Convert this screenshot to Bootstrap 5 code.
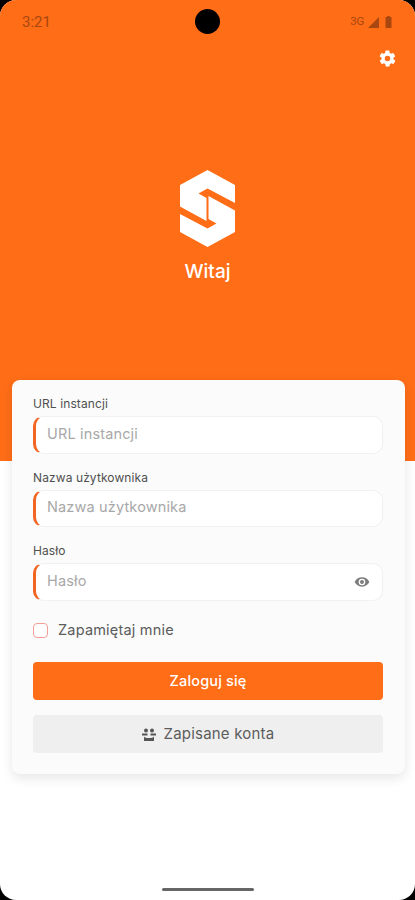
<!DOCTYPE html>
<html lang="pl">
<head>
<meta charset="utf-8">
<meta name="viewport" content="width=device-width, initial-scale=1">
<link href="https://cdn.jsdelivr.net/npm/bootstrap@5.3.0/dist/css/bootstrap.min.css" rel="stylesheet">
<style>
html,body{height:100%;background:#000;overflow:hidden}
body{font-family:"Inter","Liberation Sans",sans-serif}
.app-screen{width:415px;height:900px;background:#fff;border-radius:16px;overflow:hidden;position:relative}
.hero-band{height:461px;background:#ff6d17}
.status-row{height:44px;padding:0 23px 0 22px;color:#a8470f;font-size:15px;font-family:"Roboto",sans-serif}
.status-3g{font-size:11.5px;letter-spacing:-.3px;margin-right:4px}
.sig-icon{margin-right:6px}
.cam-dot{width:25px;height:25px;background:#000;border-radius:50%;left:195px;top:9px}
.gear-row{padding:5px 18px 0 0;height:42px}
.logo-stack{margin-top:84px}
.welcome{font-size:19px;color:#fff;font-weight:500;margin-top:13px;line-height:24px}
.login-panel{margin:-81px 10px 0 12px;height:394px;background:#fbfbfb;border-radius:8px;box-shadow:0 4px 12px rgba(0,0,0,.1);padding:15px 22px 0 21px;position:relative}
.fld-label{font-size:12px;letter-spacing:.1px;color:#505050;line-height:18px;margin-bottom:3px;display:block}
.fld-wrap{height:37.5px;background:#fff;border:1px solid #f1f1f1;border-left:3px solid #f26522;border-radius:10px;margin-bottom:15px;padding-left:11px}
.fld-input{border:0;outline:0;background:transparent;flex:1;min-width:0;height:100%;font-size:14.5px;letter-spacing:.15px;color:#444;font-family:inherit;padding:0 0 3px}
.fld-input::placeholder{color:#a8a8a8;opacity:1}
.eye-icon{margin-right:12px}
.remember{margin-top:20.500px;height:18px}
.tick-box{width:15px;height:15px;border:1.5px solid #f4a097;border-radius:4px;background:#fff;flex:none}
.tick-label{font-size:14.5px;letter-spacing:.2px;color:#5c5c5c;margin-left:10px}
.btn-login{background:#ff6d17;color:#fff;font-size:14.5px;letter-spacing:.15px;font-weight:500;height:38px;border-radius:4px;border:0;margin-top:23px;width:100%}
.btn-login:hover{background:#ff6d17;color:#fff}
.btn-saved{background:#efefef;color:#5c5c5c;font-size:15px;letter-spacing:.2px;height:38px;border-radius:4px;border:0;margin-top:15px;width:100%}
.home-bar{width:92px;height:3px;background:#666;border-radius:2px;left:162px;bottom:9px}
</style>
</head>
<body>
<div class="app-screen">
  <div class="hero-band">
    <div class="status-row d-flex align-items-center justify-content-between">
      <span>3:21</span>
      <span class="d-flex align-items-center">
        <span class="status-3g">3G</span>
        <svg class="sig-icon" width="11" height="11" viewBox="0 0 11 11"><path d="M11 0V11H0Z" fill="#a8470f"/></svg>
        <svg width="7" height="12" viewBox="0 0 7 12"><path d="M2.200 0h2.600v1H6.500v11H.5V1h1.700z" fill="#a8470f"/></svg>
      </span>
    </div>
    <div class="gear-row d-flex justify-content-end">
      <svg width="19" height="19" viewBox="0 0 24 24"><path fill="#fff" d="M19.400 13c.1-.3.1-.6.1-1s0-.7-.1-1l2.100-1.600c.2-.2.2-.4.1-.6l-2-3.500c-.1-.2-.4-.3-.6-.2l-2.500 1c-.5-.4-1.100-.7-1.700-1l-.4-2.600c0-.3-.2-.5-.5-.5h-4c-.3 0-.5.2-.5.400l-.4 2.700c-.6.2-1.200.6-1.700 1l-2.500-1c-.2-.1-.5 0-.6.200l-2 3.500c-.1.200 0 .5.100.600L4.600 11c0 .3-.1.700-.1 1s0 .7.100 1l-2.100 1.600c-.2.200-.2.400-.1.600l2 3.500c.1.200.4.300.6.200l2.500-1c.5.400 1.100.700 1.700 1l.4 2.600c0 .3.200.5.500.5h4c.3 0 .5-.2.500-.400l.4-2.700c.6-.2 1.200-.6 1.700-1l2.500 1c.2.100.5 0 .6-.200l2-3.500c.1-.200 0-.5-.100-.600zM12 15.500a3.500 3.500 0 1 1 0-7 3.500 3.500 0 0 1 0 7z"/></svg>
    </div>
    <div class="logo-stack d-flex flex-column align-items-center">
      <svg width="55" height="77" viewBox="0 0 55 77">
        <path fill="#fff" d="M27.500 0 55 15V33L27.500 18.500 18.500 23.500 26.500 28V51L0 36.500V15Z"/>
        <path fill="#fff" d="M27.500 77 0 62V44L27.500 58.500 36.500 53.500 28.500 49V26L55 40.500V62Z"/>
      </svg>
      <div class="welcome">Witaj</div>
    </div>
  </div>
  <div class="login-panel">
    <label class="fld-label">URL instancji</label>
    <div class="fld-wrap d-flex align-items-center"><input class="fld-input" placeholder="URL instancji"></div>
    <label class="fld-label">Nazwa użytkownika</label>
    <div class="fld-wrap d-flex align-items-center"><input class="fld-input" placeholder="Nazwa użytkownika"></div>
    <label class="fld-label">Hasło</label>
    <div class="fld-wrap d-flex align-items-center">
      <input class="fld-input" placeholder="Hasło">
      <svg class="eye-icon" width="16" height="16" viewBox="0 0 24 24"><path fill="#7d7d7d" d="M12 5C7 5 2.700 8.100 1 12c1.700 3.900 6 7 11 7s9.300-3.100 11-7c-1.700-3.900-6-7-11-7zm0 12a5 5 0 1 1 0-10 5 5 0 0 1 0 10zm0-8a3 3 0 1 0 0 6 3 3 0 0 0 0-6z"/></svg>
    </div>
    <div class="remember d-flex align-items-center"><span class="tick-box"></span><span class="tick-label">Zapamiętaj mnie</span></div>
    <button class="btn btn-login d-block">Zaloguj się</button>
    <button class="btn btn-saved d-flex align-items-center justify-content-center gap-2">
      <svg width="14" height="13" viewBox="0 0 14 13"><g fill="#555"><circle cx="4" cy="2.500" r="2"/><circle cx="10" cy="2.500" r="2"/><path d="M0 5.500h5.500v2H0zM8.500 5.500H14v2H8.500z"/><path d="M2 8.500c1 2 9 2 10 0V13H2z"/></g></svg>
      Zapisane konta
    </button>
  </div>
  <div class="cam-dot position-absolute"></div>
  <div class="home-bar position-absolute"></div>
</div>
<script src="https://cdn.jsdelivr.net/npm/bootstrap@5.3.0/dist/js/bootstrap.bundle.min.js"></script>
</body>
</html>
